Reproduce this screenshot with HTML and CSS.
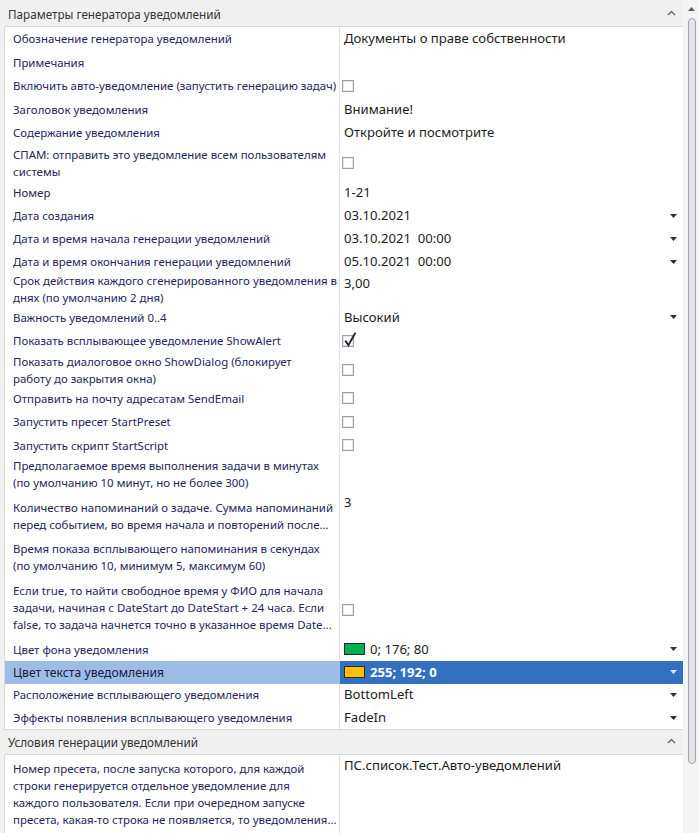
FILE: index.html
```html
<!DOCTYPE html>
<html lang="ru">
<head>
<meta charset="utf-8">
<title>Параметры генератора уведомлений</title>
<link rel="stylesheet" href="styles.css">
</head>
<body>
<div class="app">
  <div class="content">
    <div class="cat-head first">
      <span class="cat-title">Параметры генератора уведомлений</span>
      <svg class="chev" width="9" height="6" viewBox="0 0 9 6"><path d="M1 5 L4.5 1.5 L8 5" stroke="#6f6f6f" stroke-width="1.5" fill="none"/></svg>
    </div>
    <div class="rows">
      <div class="row"><div class="lbl">Обозначение генератора уведомлений</div><div class="val">Документы о праве собственности</div></div>
      <div class="row"><div class="lbl">Примечания</div><div class="val"></div></div>
      <div class="row"><div class="lbl">Включить авто-уведомление (запустить генерацию задач)</div><div class="val"><span class="cb"></span></div></div>
      <div class="row"><div class="lbl">Заголовок уведомления</div><div class="val">Внимание!</div></div>
      <div class="row"><div class="lbl">Содержание уведомления</div><div class="val">Откройте и посмотрите</div></div>
      <div class="row h36"><div class="lbl">СПАМ: отправить это уведомление всем пользователям<br>системы</div><div class="val"><span class="cb"></span></div></div>
      <div class="row"><div class="lbl">Номер</div><div class="val">1-21</div></div>
      <div class="row s"><div class="lbl">Дата создания</div><div class="val drop"><span>03.10.2021</span><svg class="arrow" width="7" height="4" viewBox="0 0 7 4"><path d="M0 0H7L3.5 4Z"/></svg></div></div>
      <div class="row s"><div class="lbl">Дата и время начала генерации уведомлений</div><div class="val drop"><span>03.10.2021&nbsp; 00:00</span><svg class="arrow" width="7" height="4" viewBox="0 0 7 4"><path d="M0 0H7L3.5 4Z"/></svg></div></div>
      <div class="row s"><div class="lbl">Дата и время окончания генерации уведомлений</div><div class="val drop"><span>05.10.2021&nbsp; 00:00</span><svg class="arrow" width="7" height="4" viewBox="0 0 7 4"><path d="M0 0H7L3.5 4Z"/></svg></div></div>
      <div class="row h325"><div class="lbl">Срок действия каждого сгенерированного уведомления в<br>днях (по умолчанию 2 дня)</div><div class="val vtop">3,00</div></div>
      <div class="row"><div class="lbl">Важность уведомлений 0..4</div><div class="val drop"><span>Высокий</span><svg class="arrow" width="7" height="4" viewBox="0 0 7 4"><path d="M0 0H7L3.5 4Z"/></svg></div></div>
      <div class="row"><div class="lbl">Показать всплывающее уведомление ShowAlert</div><div class="val"><span class="cb checked"><svg class="tick" width="14" height="16" viewBox="0 0 14 16"><path d="M2.3 8.6 L5.4 13.2 L12.4 0.8" stroke="#262630" stroke-width="1.9" fill="none"/></svg></span></div></div>
      <div class="row h34"><div class="lbl">Показать диалоговое окно ShowDialog (блокирует<br>работу до закрытия окна)</div><div class="val"><span class="cb"></span></div></div>
      <div class="row"><div class="lbl">Отправить на почту адресатам SendEmail</div><div class="val"><span class="cb"></span></div></div>
      <div class="row"><div class="lbl">Запустить пресет StartPreset</div><div class="val"><span class="cb"></span></div></div>
      <div class="row"><div class="lbl">Запустить скрипт StartScript</div><div class="val"><span class="cb"></span></div></div>
      <div class="row h415 ltop"><div class="lbl">Предполагаемое время выполнения задачи в минутах<br>(по умолчанию 10 минут, но не более 300)</div><div class="val"></div></div>
      <div class="row h415 ltop"><div class="lbl">Количество напоминаний о задаче. Сумма напоминаний<br>перед событием, во время начала и повторений после...</div><div class="val vtop up">3</div></div>
      <div class="row h415 ltop"><div class="lbl">Время показа всплывающего напоминания в секундах<br>(по умолчанию 10, минимум 5, максимум 60)</div><div class="val"></div></div>
      <div class="row h565 ltop"><div class="lbl">Если true, то найти свободное время у ФИО для начала<br>задачи, начиная с DateStart до DateStart + 24 часа. Если<br>false, то задача начнется точно в указанное время Date...</div><div class="val"><span class="cb"></span></div></div>
      <div class="row xs"><div class="lbl">Цвет фона уведомления</div><div class="val drop"><span class="color"><span class="swatch green"></span>0; 176; 80</span><svg class="arrow" width="7" height="4" viewBox="0 0 7 4"><path d="M0 0H7L3.5 4Z"/></svg></div></div>
      <div class="row xs selected"><div class="lbl">Цвет текста уведомления</div><div class="val drop"><span class="color"><span class="swatch yellow"></span>255; 192; 0</span><svg class="arrow" width="7" height="4" viewBox="0 0 7 4"><path d="M0 0H7L3.5 4Z"/></svg></div></div>
      <div class="row xs"><div class="lbl">Расположение всплывающего уведомления</div><div class="val drop"><span>BottomLeft</span><svg class="arrow" width="7" height="4" viewBox="0 0 7 4"><path d="M0 0H7L3.5 4Z"/></svg></div></div>
      <div class="row xs"><div class="lbl">Эффекты появления всплывающего уведомления</div><div class="val drop"><span>FadeIn</span><svg class="arrow" width="7" height="4" viewBox="0 0 7 4"><path d="M0 0H7L3.5 4Z"/></svg></div></div>
    </div>
    <div class="cat-head">
      <span class="cat-title">Условия генерации уведомлений</span>
      <svg class="chev" width="9" height="6" viewBox="0 0 9 6"><path d="M1 5 L4.5 1.5 L8 5" stroke="#6f6f6f" stroke-width="1.5" fill="none"/></svg>
    </div>
    <div class="rows last">
      <div class="row big ltop"><div class="lbl">Номер пресета, после запуска которого, для каждой<br>строки генерируется отдельное уведомление для<br>каждого пользователя. Если при очередном запуске<br>пресета, какая-то строка не появляется, то уведомления...</div><div class="val vtop">ПС.список.Тест.Авто-уведомлений</div></div>
    </div>
  </div>
  <div class="vscroll">
    <svg class="sarrow" width="7" height="4" viewBox="0 0 7 4"><path d="M0 4H7L3.5 0Z"/></svg>
    <div class="thumb"></div>
  </div>
</div>
</body>
</html>
```
FILE: styles.css
```css
html, body {
  margin: 0;
  padding: 0;
  width: 699px;
  height: 833px;
  overflow: hidden;
}
body {
  background: #f0f0f0;
  font-family: "Noto Sans", "Open Sans", sans-serif;
  color: #1e1e1e;
}
.app {
  display: flex;
  width: 699px;
  height: 833px;
}
.content {
  width: 683px;
  flex: none;
  padding-top: 2px;
  overflow: hidden;
}
.cat-head {
  height: 24px;
  display: flex;
  align-items: center;
  justify-content: space-between;
  padding: 0 7px 0 8px;
  font-size: 11.7px;
  color: #333;
}
.cat-title { line-height: 16px; }
.chev { display: block; margin-top: -2px; }
.rows {
  margin-left: 4px;
  border: 1px solid #d9d9d9;
  border-right: none;
  background: #fff;
}
.rows.last { border-bottom: none; }
.row {
  display: flex;
  height: 23.5px;
}
.row.s { height: 23px; }
.row.xs { height: 22.75px; }
.row.h36 { height: 36px; }
.row.h325 { height: 32.5px; }
.row.h34 { height: 34px; }
.row.h415 { height: 41.5px; }
.row.h565 { height: 56.5px; }
.row.big { height: 90px; }
.lbl {
  width: 335px;
  flex: none;
  box-sizing: border-box;
  border-right: 1px solid #e2e2e2;
  padding-left: 8px;
  display: flex;
  align-items: center;
  font-size: 11.45px;
  line-height: 17px;
  color: #25255c;
  white-space: nowrap;
  overflow: hidden;
}
.ltop .lbl { align-items: flex-start; }
.big .lbl { padding-top: 4.5px; }
.val {
  flex: 1;
  min-width: 0;
  display: flex;
  align-items: center;
  padding-left: 4px;
  padding-right: 6px;
  font-size: 13.1px;
  line-height: 17px;
  color: #1c1c1c;
  white-space: nowrap;
}
.val.vtop { align-items: flex-start; padding-top: 2px; }
.val.vtop.up { padding-top: 0; margin-top: -5px; }
.big .val.vtop { padding-top: 2px; }
.val.drop { justify-content: space-between; }
.arrow { display: block; flex: none; fill: #2e2e3a; }
.cb {
  position: relative;
  display: block;
  width: 12px;
  height: 12px;
  box-sizing: border-box;
  margin-left: -2px;
  border: 1px solid #9c9eaa;
  background: #fff;
  box-shadow: inset 0 0 0 1px #e6e6ec;
}
.tick {
  position: absolute;
  left: 0;
  top: -4px;
}
.color { display: flex; align-items: center; }
.swatch {
  display: block;
  width: 21px;
  height: 12px;
  box-sizing: border-box;
  border: 1px solid #2a2a2a;
  margin-right: 5px;
}
.swatch.green { background: #00b050; }
.swatch.yellow { background: #ffc000; }
.selected .lbl {
  background: #9dbde6;
  font-size: 12.2px;
  color: #1a1a3a;
  border-right-color: #9dbde6;
}
.selected .val {
  background: #3171c0;
  color: #fff;
  font-weight: 700;
}
.selected .arrow { fill: #dfe8f5; }
.vscroll {
  width: 16px;
  flex: none;
  display: flex;
  flex-direction: column;
  align-items: center;
  background: #f3f3f3;
}
.sarrow { display: block; fill: #5b5b68; margin-top: 7px; margin-left: 1px; }
.thumb {
  margin-top: 7px;
  margin-left: 1px;
  width: 8px;
  height: 746px;
  box-sizing: border-box;
  border: 1px solid #a2a2ac;
  border-radius: 4px;
  background: #e4e4e8;
}
```
